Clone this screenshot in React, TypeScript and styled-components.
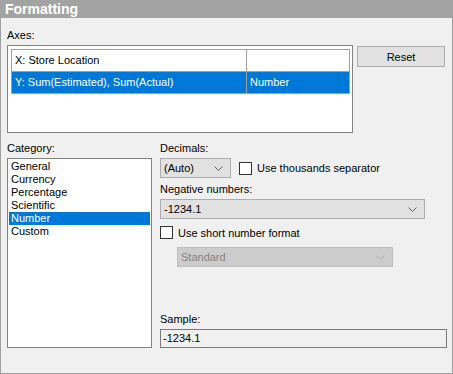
import styled, { createGlobalStyle } from "styled-components"

const GlobalStyle = createGlobalStyle`
    html, body {
        margin: 0;
        padding: 0;
        background: #ffffff;
    }
    body {
        font-family: "Liberation Sans", Arial, sans-serif;
        font-size: 11px;
        color: #000000;
    }
`

const Frame = styled.div`
    width: 453px;
    height: 374px;
    display: flex;
    flex-direction: column;
`

const Header = styled.div`
    height: 18px;
    flex: 0 0 18px;
    background: #a3a3a3;
    color: #ffffff;
    font-weight: bold;
    font-size: 14px;
    line-height: 18px;
    padding-left: 5px;
`

const Panel = styled.div`
    flex: 1 1 auto;
    background: #f0f0f0;
    border: 1px solid #a0a0a0;
    border-top: none;
    padding: 11px 5px 0 6px;
    display: flex;
    flex-direction: column;
`

const Label = styled.div<{ $top?: number }>`
    height: 13px;
    line-height: 13px;
    margin-top: ${p => p.$top ?? 0}px;
    margin-bottom: 3px;
    white-space: nowrap;
`

const AxesRow = styled.div`
    display: flex;
    gap: 4px;
    align-items: flex-start;
`

const ListBox = styled.div<{ $w: number; $h: number }>`
    width: ${p => p.$w}px;
    height: ${p => p.$h}px;
    box-sizing: border-box;
    background: #ffffff;
    border: 1px solid #828282;
`

const AxesTable = styled.div`
    margin: 3px;
    width: 338px;
    border-top: 1px solid #a0a0a0;
    border-left: 1px solid #a0a0a0;
`

const AxisRow = styled.div<{ $selected?: boolean }>`
    display: grid;
    grid-template-columns: 235px 1fr;
    height: 22px;
    background: ${p => (p.$selected ? "#0078d7" : "#ffffff")};
    color: ${p => (p.$selected ? "#ffffff" : "#000000")};
`

const AxisCell = styled.div`
    border-right: 1px solid #a0a0a0;
    border-bottom: 1px solid #a0a0a0;
    padding-left: 3px;
    line-height: 21px;
    white-space: nowrap;
`

const Button = styled.button`
    margin-top: 1px;
    width: 88px;
    height: 21px;
    background: #e1e1e1;
    border: 1px solid #adadad;
    font-family: inherit;
    font-size: 11px;
    color: #000000;
    padding: 0;
`

const Lower = styled.div`
    display: grid;
    grid-template-columns: 145px 1fr;
    column-gap: 8px;
    margin-top: 9px;
`

const Column = styled.div`
    display: flex;
    flex-direction: column;
`

const CategoryItem = styled.div<{ $selected?: boolean }>`
    height: 13px;
    line-height: 13px;
    padding-left: 2px;
    background: ${p => (p.$selected ? "#0078d7" : "transparent")};
    color: ${p => (p.$selected ? "#ffffff" : "#000000")};
`

const CategoryList = styled(ListBox)`
    padding: 1px;
`

const Combo = styled.div<{ $w: number; $disabled?: boolean; $left?: number; $top?: number }>`
    width: ${p => p.$w}px;
    height: 20px;
    box-sizing: border-box;
    margin-left: ${p => p.$left ?? 0}px;
    margin-top: ${p => p.$top ?? 0}px;
    background: ${p => (p.$disabled ? "#cccccc" : "#e1e1e1")};
    border: 1px solid ${p => (p.$disabled ? "#bfbfbf" : "#adadad")};
    color: ${p => (p.$disabled ? "#838383" : "#000000")};
    display: flex;
    align-items: center;
    justify-content: space-between;
    padding: 0 7px 0 3px;
    flex: 0 0 auto;

    svg {
        stroke: ${p => (p.$disabled ? "#b0b0b0" : "#606060")};
    }
`

const CheckRow = styled.div<{ $top?: number }>`
    display: flex;
    align-items: center;
    gap: 5px;
    margin-top: ${p => p.$top ?? 0}px;
    height: 13px;
    white-space: nowrap;
`

const CheckBox = styled.span`
    width: 13px;
    height: 13px;
    box-sizing: border-box;
    border: 1px solid #333333;
    background: #ffffff;
    flex: 0 0 auto;
`

const DecimalsRow = styled.div`
    display: flex;
    align-items: center;
    gap: 8px;
`

const Spacer = styled.div`
    flex: 1 1 auto;
`

const SampleBox = styled.div`
    width: 287px;
    height: 19px;
    box-sizing: border-box;
    border: 1px solid #7a7a7a;
    background: #f0f0f0;
    padding-left: 2px;
    line-height: 17px;
`

const Chevron = () => (
    <svg width="9" height="5" viewBox="0 0 9 5" fill="none" strokeWidth="1">
        <polyline points="0.5,0.5 4.5,4.5 8.5,0.5" />
    </svg>
)

const categories = ["General", "Currency", "Percentage", "Scientific", "Number", "Custom"]

export default function App() {
    return (
        <Frame>
            <GlobalStyle />
            <Header>Formatting</Header>
            <Panel>
                <Label>Axes:</Label>
                <AxesRow>
                    <ListBox $w={346} $h={88}>
                        <AxesTable>
                            <AxisRow>
                                <AxisCell>X: Store Location</AxisCell>
                                <AxisCell />
                            </AxisRow>
                            <AxisRow $selected>
                                <AxisCell>Y: Sum(Estimated), Sum(Actual)</AxisCell>
                                <AxisCell>Number</AxisCell>
                            </AxisRow>
                        </AxesTable>
                    </ListBox>
                    <Button>Reset</Button>
                </AxesRow>

                <Lower>
                    <Column>
                        <Label>Category:</Label>
                        <CategoryList $w={145} $h={190}>
                            {categories.map(c => (
                                <CategoryItem key={c} $selected={c === "Number"}>{c}</CategoryItem>
                            ))}
                        </CategoryList>
                    </Column>

                    <Column>
                        <Label>Decimals:</Label>
                        <DecimalsRow>
                            <Combo $w={71}>(Auto)<Chevron /></Combo>
                            <CheckRow>
                                <CheckBox />
                                Use thousands separator
                            </CheckRow>
                        </DecimalsRow>
                        <Label $top={5}>Negative numbers:</Label>
                        <Combo $w={265}>-1234.1<Chevron /></Combo>
                        <CheckRow $top={7}>
                            <CheckBox />
                            Use short number format
                        </CheckRow>
                        <Combo $w={216} $left={17} $top={8} $disabled>Standard<Chevron /></Combo>
                        <Spacer />
                        <Label>Sample:</Label>
                        <SampleBox>-1234.1</SampleBox>
                    </Column>
                </Lower>
            </Panel>
        </Frame>
    )
}
